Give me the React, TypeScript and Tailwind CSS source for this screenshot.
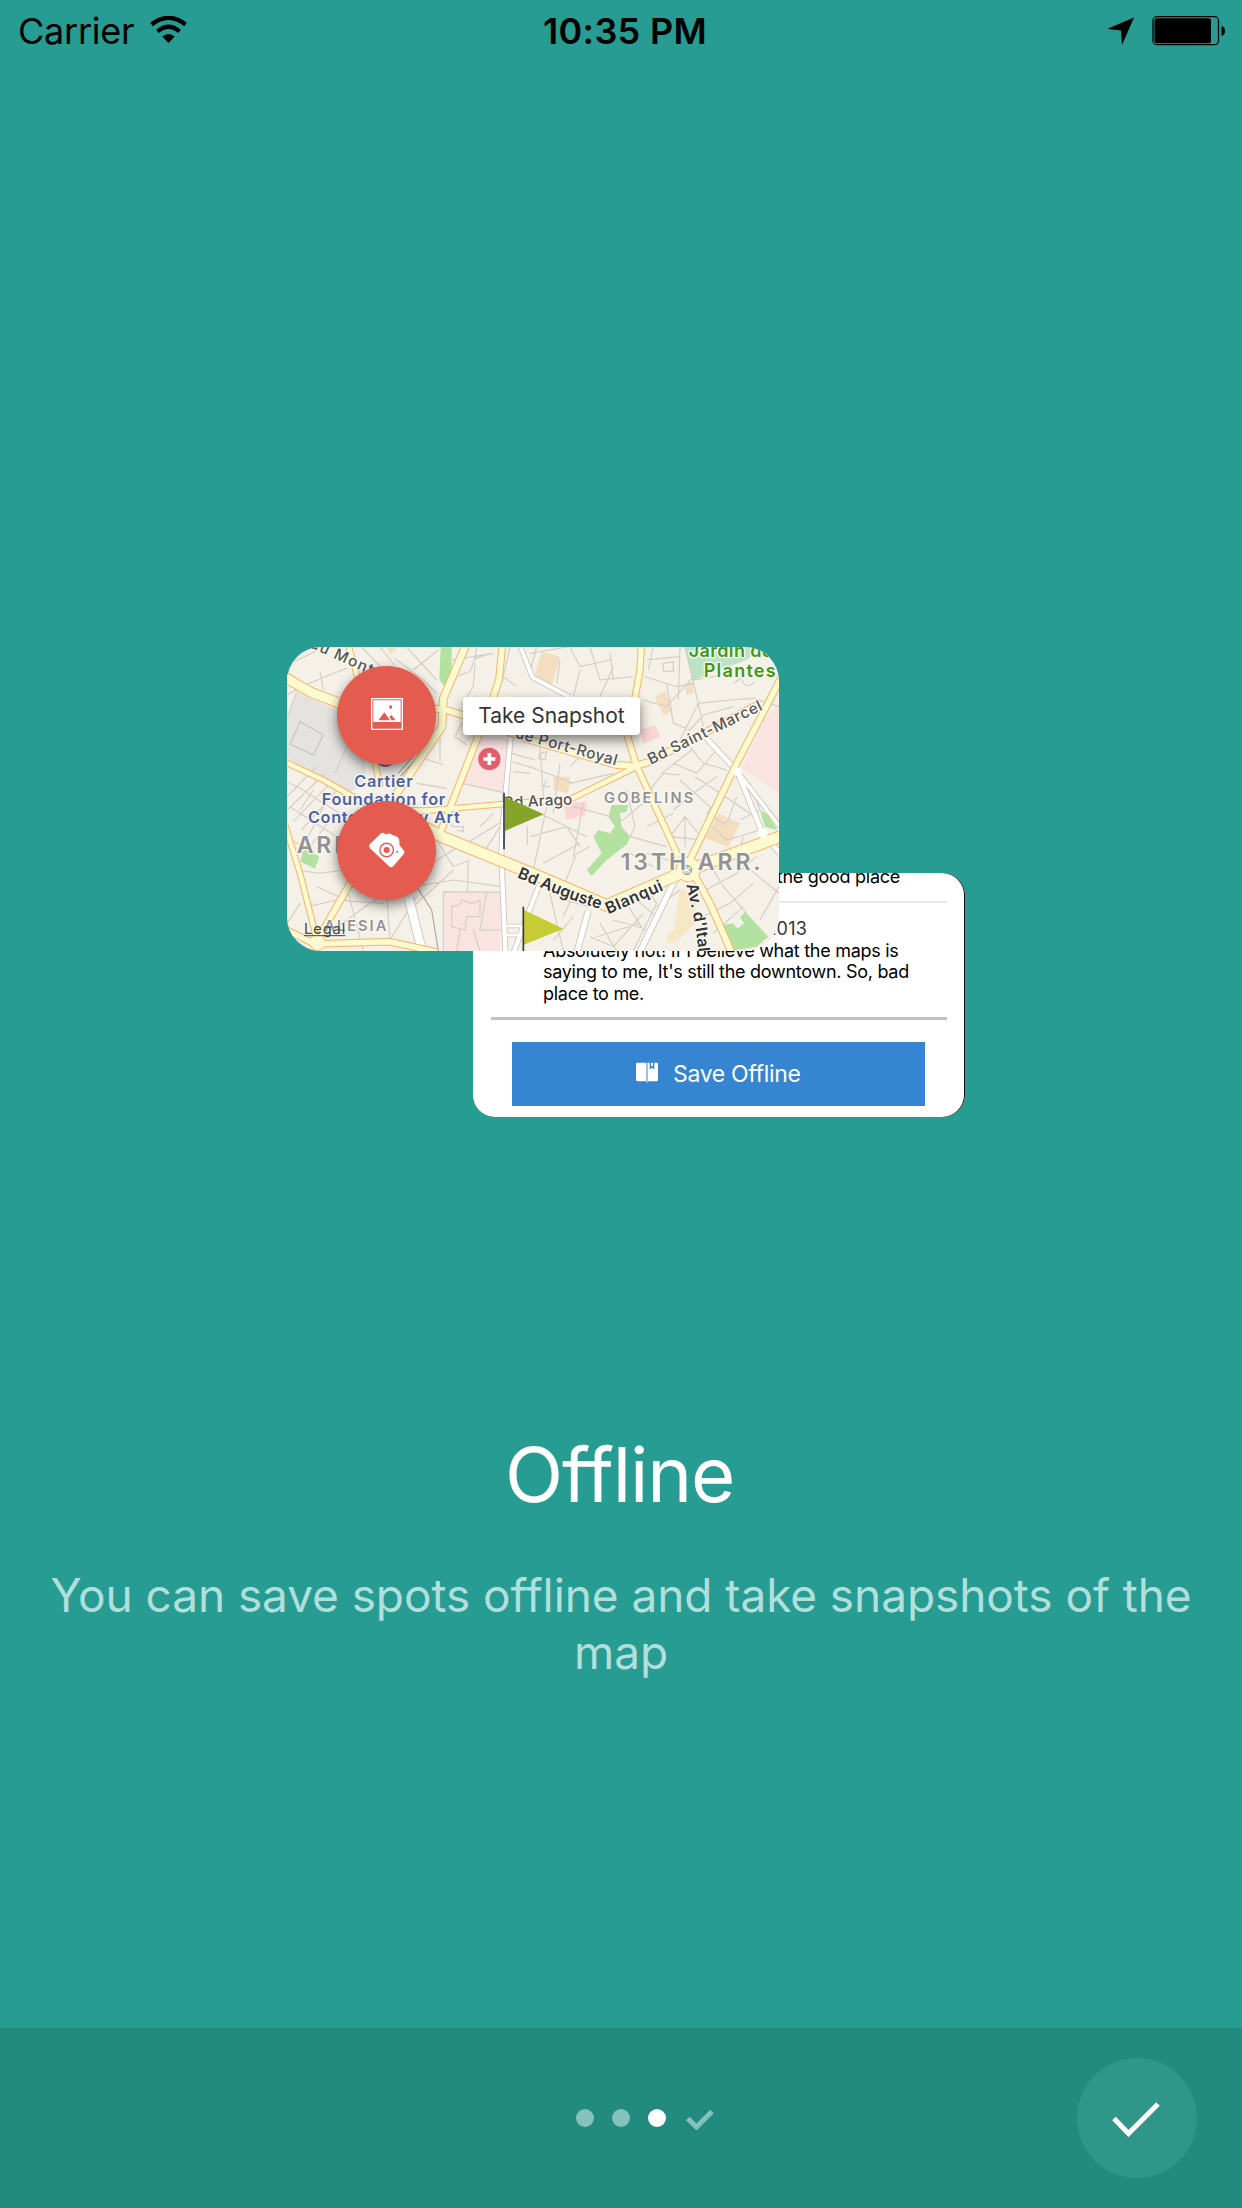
const streets = [
  'M21 75 L95 40 L130 21', 'M21 165 L75 135', 'M120 95 L130 150', 'M50 155 L21 235', 'M75 135 L200 85',
  'M245 21 L300 80', 'M300 21 L345 78', 'M345 55 L430 120 L470 160', 'M380 21 L470 120', 'M400 90 L475 30',
  'M515 60 L640 40', 'M525 110 L570 95 L585 55 L620 45', 'M585 55 L590 21', 'M585 70 L580 140 L545 195',
  'M670 110 L710 140', 'M690 21 L670 110', 'M480 250 L480 365', 'M420 350 L490 375', 'M525 290 L545 250 L600 275',
  'M525 290 L560 315', 'M695 340 L765 360', 'M700 365 L760 385', 'M700 395 L750 400', 'M545 430 L672 458', 'M410 430 L500 445',
  'M205 310 L165 400', 'M21 470 L110 380', 'M21 510 L130 405', 'M40 545 L150 430', 'M65 570 L180 440', 'M21 425 L60 445 L210 540',
  'M30 500 L170 590', 'M100 450 L60 510', 'M130 500 L80 600', 'M90 620 L150 540', 'M21 600 L75 615',
  'M50 690 L120 700 L190 690', 'M110 740 L210 785', 'M85 800 L170 780 L310 790', 'M60 790 L21 850', 'M160 870 L270 790 L550 610',
  'M200 740 L250 933', 'M320 760 L330 900', 'M330 900 L410 770', 'M400 740 L520 720 L665 740', 'M470 600 L520 680 L570 660',
  'M565 665 L562 755', 'M490 755 L665 757', 'M490 755 L490 933', 'M520 690 L400 800', 'M480 520 L520 560 L550 560 L550 575 L530 570',
  'M600 560 L640 520', 'M560 610 L665 545', 'M742 560 L742 615', 'M610 640 L660 560', 'M620 757 L600 870 L665 870',
  'M515 800 L540 795 L545 780 L575 790 L600 780 L600 830 L560 830 L555 870 L515 860 Z', 'M540 870 L530 933', 'M580 870 L600 933',
  'M750 40 L860 21', 'M770 21 L750 95', 'M870 21 L900 80 L990 60', 'M900 90 L880 170', 'M930 21 L960 120 L1060 110', 'M840 60 L830 130',
  'M990 40 L1000 120', 'M1000 80 L960 170', 'M1100 60 L1200 50', 'M1095 110 L1190 140 L1240 130', 'M1120 21 L1105 90', 'M1150 70 L1180 65 L1180 95 L1150 92 Z',
  'M1200 21 L1195 180', 'M1160 130 L1180 250', 'M1090 180 L1160 200 L1240 110', 'M1215 21 L1255 190', 'M1255 190 L1350 180 L1420 175 L1497 200',
  'M1240 120 L1300 110 L1330 100', 'M1385 120 Q1400 150 1425 125 M1360 130 L1390 110', 'M1270 260 L1255 190 L1220 260 L1190 320',
  'M1180 250 L1230 270 L1270 225 L1360 200', 'M1230 320 L1270 370 L1340 390', 'M1145 400 L1235 330', 'M1180 370 L1250 400 L1310 330',
  'M1100 460 L1150 400 L1200 405', 'M1245 410 L1410 520', 'M1310 410 L1240 460 L1180 510', 'M1200 420 L1290 500', 'M1350 430 L1280 520 L1340 555',
  'M750 380 L880 430', 'M780 320 L790 470', 'M840 370 L820 520', 'M780 340 L800 335 L795 360 L775 355 Z', 'M800 420 L790 440 L810 440',
  'M870 380 L920 330', 'M870 430 L1000 400', 'M880 500 L1030 540 L1100 480', 'M910 490 L880 650', 'M780 520 L920 590', 'M800 500 L760 690',
  'M750 590 L860 560 L900 620', 'M790 670 L900 610', 'M850 740 L890 640 L930 620', 'M1040 450 L1065 560 L1050 590', 'M1050 590 L1160 620',
  'M1215 530 L1215 620', 'M1170 590 L1215 530 L1270 600 Z', 'M1100 560 L1180 520', 'M1100 640 L1180 665', 'M1050 640 L1120 680',
  'M1300 560 L1340 600 L1440 570', 'M1370 470 L1340 550', 'M1390 590 L1370 660', 'M1410 430 L1440 510 L1380 540', 'M1300 690 L1330 740',
  'M1260 760 L1370 700 L1430 650', 'M1330 740 L1400 820', 'M1400 680 L1497 760', 'M1497 740 L1440 840', 'M1270 830 L1350 790 L1420 730', 'M1300 880 L1390 800',
  'M1040 790 L1090 870', 'M1070 780 L1130 830', 'M950 890 L1080 850', 'M960 850 L1010 933', 'M1000 840 L1110 870', 'M1100 750 L1130 790 L1060 933',
  'M880 830 L820 900', 'M850 780 L930 800', 'M760 770 L750 850', 'M800 720 L850 933', 'M890 740 L850 830', 'M1130 800 L1200 750', 'M930 890 L1000 920 L1090 820',
];

const white: [string, number][] = [
  ['M722 21 L757 112 L870 172', 12], ['M692 290 L668 560 L664 640 L676 933', 13], ['M385 770 L428 940', 25],
  ['M1182 725 L1078 940', 16], ['M925 812 L890 940', 16], ['M778 735 L760 780 L700 940', 13], ['M1275 290 L1372 395 L1448 580 L1500 640', 14],
  ['M1372 395 L1500 560', 11], ['M680 858 L725 858 M680 885 L722 885', 9],
];

const yellow: [string, number][] = [
  ['M205 15 L228 95 L300 440', 14], ['M667 15 L657 120 L640 170 L590 300 L478 585', 17],
  ['M558 15 L490 175 L486 260 L350 460', 20], ['M15 366 L130 420 L290 510 L440 512 L670 492 L870 478 L1070 380', 14],
  ['M1084 15 L1080 90 L1066 170 L1030 250 L1070 378 L1195 650', 16], ['M15 555 L60 700 L112 905', 14], ['M112 900 L210 730 L320 560', 17],
  ['M15 868 L105 912 L330 905 L470 936', 17], ['M1505 110 L1365 380 L1225 670', 17], ['M1235 690 L1290 790 L1345 915 L1355 940', 18],
  ['M15 112 L95 158 L180 196 L300 206 L490 207 L570 232 L750 300 L1010 375 L1065 378 L1110 365 L1440 190', 18],
  ['M15 112 L95 158 L180 190', 27],
  ['M430 560 L485 590 L750 698 L980 796 L1225 690 L1500 590', 32],
];

function CityMap() {
  return (
    <svg viewBox="21 21 1476 912" className="col-start-1 row-start-1 block h-full w-full" fontFamily="Inter, sans-serif">
      <rect x="21" y="21" width="1476" height="912" fill="#f6f1e8" />
      <path d="M50 155 L245 245 L260 430 L205 458 L21 355 L21 240 Z" fill="#e4e3e0" />
      <path d="M590 290 H690 L672 455 L545 430 Z M490 755 H665 L660 933 H490 Z M1450 240 L1497 190 V460 L1385 385 Z" fill="#fae4e2" />
      <path d="M1080 270 L1125 255 L1142 290 L1090 312 Z M850 490 L920 485 L915 525 L860 540 Z" fill="#f9d5d4" />
      <path d="M785 35 L840 50 L815 138 L762 110 Z M1125 170 L1155 152 L1180 212 L1150 225 Z M1315 520 L1380 550 L1345 622 L1275 595 Z M820 410 H870 L865 460 L820 450 Z M1215 135 L1240 125 V160 L1218 165 Z M320 21 H355 L330 45 Z" fill="#f3dfc0" />
      <path d="M1200 745 L1250 770 L1245 850 L1190 905 L1160 912 L1162 885 L1182 870 Z" fill="#f6e8c4" />
      <g fill="#b3e2a0">
        <path d="M482 21 H515 V110 L495 140 L478 120 Z M70 622 L118 650 L105 686 L62 665 Z" />
        <path d="M995 495 L1045 495 L1040 515 L1020 520 L1025 560 L1050 590 L1042 612 L980 660 L935 708 L920 690 L965 640 L940 590 L955 570 L990 580 L1005 560 L985 530 Z" />
        <path d="M1330 855 L1365 848 L1395 815 L1465 890 L1430 920 L1350 933 Z M1440 510 L1465 525 L1492 570 L1455 560 Z" />
      </g>
      <path d="M1215 21 H1440 L1400 60 L1300 95 L1238 122 Z" fill="#bce3c6" />
      <path d="M1360 850 L1380 832 L1392 850 L1372 866 Z" fill="#f6f1e8" />
      <path d={streets.join(' ')} fill="none" stroke="#d2cdc5" strokeWidth="3.4" />
      <path d="M60 245 L130 285 L100 345 L30 312 Z" fill="none" stroke="#c9c7c2" strokeWidth="4" />
      <g fill="none" strokeLinejoin="round">
        <path d="M355 400 L470 270 M362 408 L478 278 M410 740 L455 810 L475 933" stroke="#a9a8a4" strokeWidth="3.5" />
        {white.map(([d, w]) => <path key={d} d={d} stroke="#cdc3b8" strokeWidth={w + 5} />)}
        {white.map(([d, w]) => <path key={d} d={d} stroke="#fff" strokeWidth={w} />)}
        {yellow.map(([d, w]) => <path key={d} d={d} stroke="#f5b56c" strokeWidth={w + 6} />)}
        <circle cx="1225" cy="688" r="37" fill="#fdfad0" stroke="#f5b56c" strokeWidth="3" />
        <circle cx="112" cy="907" r="24" fill="#fdfad0" stroke="#f5b56c" strokeWidth="3" />
        {yellow.map(([d, w]) => <path key={d} d={d} stroke="#fdfad0" strokeWidth={w} />)}
      </g>
      <circle cx="1372" cy="395" r="13" fill="#fff" />
      <circle cx="1448" cy="580" r="15" fill="#fff" />
      <circle cx="1221" cy="690" r="14" fill="#c5cdbb" stroke="#8f9488" strokeWidth="3" />
      <path d="M1210 680 L1232 700 M1232 680 L1210 700" stroke="#fff" strokeWidth="3" />
      <circle cx="316" cy="345" r="35" fill="#3f62b5" />

      <defs>
        <path id="mont" d="M86 20 L300 118" />
        <path id="royal" d="M660 281 L760 308 L1030 383" />
        <path id="marcel" d="M1112 374 L1500 184" />
        <path id="auguste" d="M710 712 C800 750 880 786 1000 818" />
        <path id="blanqui" d="M985 823 L1180 738" />
        <path id="italie" d="M1219 734 C1235 800 1250 860 1262 990" />
      </defs>
      <g stroke="#fbf8f2" strokeWidth="8" strokeLinejoin="round" paintOrder="stroke" fill="#555">
        <g fontSize="46" fontWeight="500">
          <text><textPath href="#mont" textLength="204">du Mont</textPath></text>
          <text><textPath href="#royal" startOffset="45" textLength="315">ue Port-Royal</textPath></text>
          <text><textPath href="#marcel" textLength="376">Bd Saint-Marcel</textPath></text>
          <text x="672" y="504" transform="rotate(-3 672 504)" textLength="206">Bd Arago</text>
        </g>
        <g fill="#333" fontSize="48" fontWeight="600">
          <text><textPath href="#auguste" textLength="268">Bd Auguste</textPath></text>
          <text><textPath href="#blanqui" textLength="182">Blanqui</textPath></text>
          <text><textPath href="#italie" textLength="206">Av. d'Ital</textPath></text>
        </g>
        <g fill="#4b62a8" fontSize="49" fontWeight="600">
          <text x="223" y="442" textLength="175">Cartier</text>
          <text x="125" y="495" textLength="371">Foundation for</text>
          <text x="84" y="548" textLength="455">Contemporary Art</text>
        </g>
        <g fill="#3c9a17" fontSize="54" fontWeight="600">
          <text x="1226" y="50" textLength="282">Jardin des</text>
          <text x="1271" y="110" textLength="216">Plantes</text>
        </g>
        <g fill="#929292" fontWeight="600">
          <text x="972" y="488" fontSize="44" textLength="268">GOBELINS</text>
          <text x="133" y="872" fontSize="44" textLength="186">ALESIA</text>
          <text x="50" y="640" fontSize="69" textLength="158">ARR</text>
          <text x="1022" y="689" fontSize="69" textLength="420">13TH ARR.</text>
        </g>
      </g>
      <text x="72" y="882" fontSize="44" fill="#444" textLength="124">Legal</text>
      <path d="M72 887 H196" stroke="#444" strokeWidth="3" />

      <circle cx="628" cy="357" r="35" fill="#e45f6c" stroke="#fff" strokeWidth="2" />
      <path d="M628 339 V375 M610 357 H646" stroke="#fff" strokeWidth="11" />
      <path d="M674 470 L791 523 L674 573 Z" fill="#86a32a" />
      <path d="M672 458 V628" stroke="#333850" strokeWidth="5" />
      <path d="M732 810 L850 866 L732 914 Z" fill="#c6cb36" />
      <path d="M730 800 V933" stroke="#333850" strokeWidth="5" />
    </svg>
  );
}

function PictureIcon() {
  return (
    <svg viewBox="0 0 96 96" className="-mt-[3px] h-8 w-8">
      <path d="M2 2 H94 V94 H2 Z" fill="none" stroke="#fff" strokeWidth="4" />
      <path d="M7 7 H89 V72 H7 Z" fill="#fff" />
      <path d="M22 67 L40 43 L57 67 Z M55 57 L61 51 L74 67 H62 Z" fill="#e45b4f" />
      <circle cx="59" cy="27" r="5" fill="#e45b4f" />
    </svg>
  );
}

function CameraIcon() {
  return (
    <svg viewBox="0 0 106 106" className="-mt-px h-9 w-9">
      <path d="M3 35 L34 5 Q38 1 43 3 L50 7 L58 4 L84 15 L89 22 L90 39 L103 55 Q106 59 103 64 L70 102 Q64 106 59 101 L3 48 Q-2 41 3 35 Z" fill="#fff" />
      <circle cx="52" cy="53" r="20" fill="none" stroke="#e45b4f" strokeWidth="4" />
      <circle cx="52" cy="53" r="9" fill="#e45b4f" />
      <circle cx="83" cy="58" r="3" fill="#e45b4f" />
    </svg>
  );
}

function MapCard() {
  return (
    <div className="z-10 col-start-1 row-start-1 grid h-[304px] w-[492px] overflow-hidden rounded-[34px]">
      <CityMap />
      <div className="z-10 col-start-1 row-start-1 flex flex-col gap-[36px] pt-[19px] pl-[50px]">
        <div className="flex gap-[27px]">
          <button className="flex h-[99px] w-[99px] shrink-0 items-center justify-center rounded-full bg-[#e45b4f] shadow-[0_5px_12px_rgba(0,0,0,0.5)]"><PictureIcon /></button>
          <div className="mt-[31px] flex h-[38px] w-[177px] items-center justify-center rounded-[4px] bg-white text-[21px] whitespace-nowrap text-[#333] shadow-[0_5px_12px_rgba(0,0,0,0.5)]">
            Take Snapshot
          </div>
        </div>
        <button className="flex h-[99px] w-[99px] items-center justify-center rounded-full bg-[#e45b4f] shadow-[0_5px_12px_rgba(0,0,0,0.5)]"><CameraIcon /></button>
      </div>
    </div>
  );
}

function SpotCard() {
  return (
    <div className="col-start-1 row-start-1 mt-[226px] ml-[186px] flex h-[244px] w-[492px] flex-col overflow-hidden rounded-[22px] bg-white px-[18px] text-[18px] leading-[21.5px] tracking-[-0.28px] text-black shadow-[inset_-1px_0_0_#111]">
      <div className="-mt-[7px] flex h-[37px] items-start justify-end border-b-2 border-[#e9e9e9] pr-[47px]">
        the good place
      </div>
      <p className="mt-[15px] self-end pr-[140px] tracking-[0.2px] text-[#333]">2013</p>
      <div className="ml-[52px] h-[77.5px] shrink-0 whitespace-nowrap">
        <p>Absolutely not! If I believe what the maps is</p>
        <p>saying to me, It's still the downtown. So, bad</p>
        <p>place to me.</p>
      </div>
      <div className="h-[3px] shrink-0 bg-[#bfc3c9]" />
      <button className="mr-[22px] ml-[21px] mt-[22px] flex h-[64px] shrink-0 items-center bg-[#3585d0] pl-[124px] text-[23px] tracking-[-0.33px] text-white">
        <svg viewBox="0 0 66 62" className="-mt-1 mr-[15px] h-[21px] w-[22px]">
          <path d="M4 2 H30 V57 H4 Q0 57 0 53 V6 Q0 2 4 2 Z M36 2 H41 V22 L48 17 L55 22 V2 H62 Q66 2 66 6 V53 Q66 57 62 57 H36 Z M31.500 2 H34.500 V61 H31.500 Z M45 2 H51 V13 L48 11 L45 13 Z" fill="#fff" />
        </svg>
        <span className="pt-[2px]">Save Offline</span>
      </button>
    </div>
  );
}

function StatusBar() {
  return (
    <header className="grid h-[60px] grid-cols-3 items-start pt-[9px] text-[36px] leading-[44px] text-black">
      <div className="flex pl-[18px]">
        <span className="tracking-[-0.25px]">Carrier</span>
        <svg viewBox="0 0 37 28" className="mt-[7px] ml-[16px] h-[28px] w-[37px]">
          <path d="M1.500 8.500 Q18.500 -5 35.500 8.500" fill="none" stroke="#000" strokeWidth="4.200" />
          <path d="M7.500 15.500 Q18.500 6 29.500 15.500" fill="none" stroke="#000" strokeWidth="4.200" />
          <path d="M12.300 20.500 Q18.500 15.500 24.700 20.500 L18.500 27 Z" />
        </svg>
      </div>
      <div className="pl-[8px] text-center font-semibold tracking-[0.3px]">10:35 PM</div>
      <div className="flex justify-end pt-[7px] pr-[16px]">
        <svg viewBox="0 0 118 30" className="h-[30px] w-[118px]">
          <path d="M26 1.500 L14 29 L13 14.500 L-1 13 Z" />
          <rect x="45" y=".7" width="65.500" height="28" rx="4" fill="none" stroke="#000" strokeWidth="1.300" />
          <rect x="46.500" y="2.200" width="56.500" height="25" rx="2.500" />
          <path d="M113.500 10 Q117 11 117 15 Q117 19 113.500 20 Z" />
        </svg>
      </div>
    </header>
  );
}

export default function App() {
  return (
    <main className="flex h-[2208px] w-[1242px] flex-col overflow-hidden bg-[#279c92] font-['Inter',sans-serif]">
      <StatusBar />
      <section className="mt-[587px] ml-[287px] grid h-[470px] w-[678px] shrink-0 items-start justify-items-start">
        <MapCard />
        <SpotCard />
      </section>
      <h1 className="mt-[307px] pr-[3px] text-center text-[76px] leading-[100px] tracking-[-1.2px] text-white">Offline</h1>
      <p className="mt-[43px] px-[40px] text-center text-[46px] leading-[57px] tracking-[-0.08px] text-[#b1dfdb]">You can save spots offline and take snapshots of the map</p>
      <footer className="mt-auto grid h-[180px] shrink-0 grid-cols-[1fr_auto] items-center bg-[#238a7f] pr-[45px] pl-[576px]">
        <div className="flex items-center gap-[18px]">
          <i className="h-[18px] w-[18px] rounded-full bg-[#84c3bc]" />
          <i className="h-[18px] w-[18px] rounded-full bg-[#84c3bc]" />
          <i className="h-[18px] w-[18px] rounded-full bg-white" />
          <svg viewBox="0 0 28 21" className="mt-[3px] ml-[2px] h-[21px] w-[28px]"><path d="M1.800 9.500 L10.500 18 L26 2.500" fill="none" stroke="#84c3bc" strokeWidth="5" /></svg>
        </div>
        <button className="flex h-[120px] w-[120px] items-center justify-center rounded-full bg-[#31968a]">
          <svg viewBox="0 0 48 35" className="mt-[3px] ml-[-2px] h-[35px] w-[48px]"><path d="M2 16.500 L16.500 31.500 L46 2" fill="none" stroke="#fff" strokeWidth="5" /></svg>
        </button>
      </footer>
    </main>
  );
}
